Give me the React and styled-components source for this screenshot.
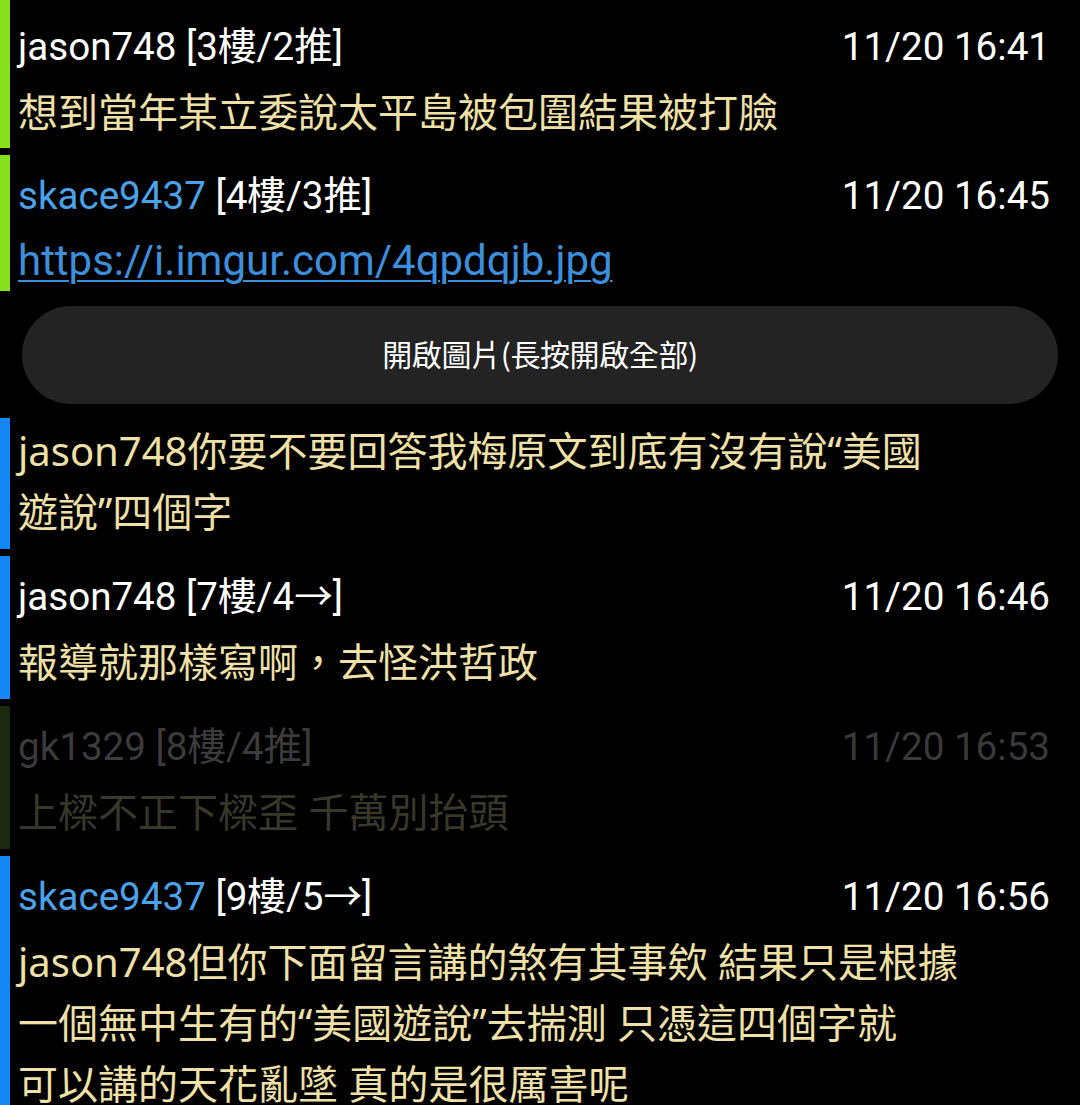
import React from "react";
import styled, { createGlobalStyle } from "styled-components";

const Global = createGlobalStyle`
  html, body { margin: 0; padding: 0; background: #000; }
  body { width: 1080px; overflow: hidden; }
  #root { width: 1080px; }
`;

const Page = styled.div`
  display: flex;
  flex-direction: column;
  gap: 7px;
  background: #000;
  width: 1080px;
`;

const Comment = styled.article`
  border-left: 10px solid ${(p) => p.$bar};
  padding: ${(p) => p.$pt ?? 7}px 30px ${(p) => p.$pb ?? 7}px 8px;
  display: flex;
  flex-direction: column;
`;

const Header = styled.div`
  display: flex;
  justify-content: space-between;
  align-items: center;
  height: 68px;
  font-family: Roboto, "Noto Sans CJK TC", sans-serif;
  font-size: 38.6px;
  line-height: 68px;
  white-space: nowrap;
`;

const Author = styled.span`
  color: ${(p) => (p.$dim ? "#3b3b3b" : p.$blue ? "#4aa2ea" : "#ffffff")};
`;

const Floor = styled.span`
  color: ${(p) => (p.$dim ? "#3b3b3b" : "#ffffff")};
`;

const Time = styled.span`
  color: ${(p) => (p.$dim ? "#393939" : "#ffffff")};
`;

const Body = styled.div`
  font-family: "Noto Sans", "Noto Sans CJK TC", sans-serif;
  font-size: 40px;
  line-height: ${(p) => p.$lh ?? 61}px;
  color: ${(p) => (p.$dim ? "#38382a" : "#eee0a6")};
  white-space: pre;
`;

const Link = styled.a`
  font-family: Roboto, sans-serif;
  font-size: 42px;
  color: #3c8fdc;
  text-decoration: underline;
  text-decoration-thickness: 2px;
  text-underline-offset: 5px;
`;

const ButtonRow = styled.div`
  padding: 8px 22px 7px 22px;
`;

const ImageButton = styled.button`
  width: 100%;
  height: 98px;
  border: none;
  border-radius: 49px;
  background: #232323;
  color: #ffffff;
  font-family: "Noto Sans CJK TC", sans-serif;
  font-size: 30px;
  letter-spacing: -0.4px;
  display: flex;
  align-items: center;
  justify-content: center;
  padding: 0 0 4px 0;
`;

const GREEN = "#86e01a";
const BLUE = "#1487f6";
const DARK = "#1b2a0c";

function Head({ author, blue, floor, time, dim }) {
  return (
    <Header>
      <span>
        <Author $blue={blue} $dim={dim}>{author}</Author>
        <Floor $dim={dim}> [{floor}]</Floor>
      </span>
      <Time $dim={dim}>{time}</Time>
    </Header>
  );
}

export default function App() {
  return (
    <>
      <Global />
      <Page>
        <Comment $bar={GREEN} $pt={13} $pb={6}>
          <Head author="jason748" floor="3樓/2推" time="11/20 16:41" />
          <Body>想到當年某立委說太平島被包圍結果被打臉</Body>
        </Comment>

        <Comment $bar={GREEN} $pb={0}>
          <Head author="skace9437" blue floor="4樓/3推" time="11/20 16:45" />
          <Body $lh={60}>
            <Link href="#">https://i.imgur.com/4qpdqjb.jpg</Link>
          </Body>
        </Comment>

        <ButtonRow>
          <ImageButton>開啟圖片(長按開啟全部)</ImageButton>
        </ButtonRow>

        <Comment $bar={BLUE} $pt={2}>
          <Body>{"jason748你要不要回答我梅原文到底有沒有說“美國\n遊說”四個字"}</Body>
        </Comment>

        <Comment $bar={BLUE}>
          <Head author="jason748" floor="7樓/4→" time="11/20 16:46" />
          <Body>報導就那樣寫啊，去怪洪哲政</Body>
        </Comment>

        <Comment $bar={DARK}>
          <Head author="gk1329" dim floor="8樓/4推" time="11/20 16:53" />
          <Body $dim>上樑不正下樑歪 千萬別抬頭</Body>
        </Comment>

        <Comment $bar={BLUE}>
          <Head author="skace9437" blue floor="9樓/5→" time="11/20 16:56" />
          <Body>
            {"jason748但你下面留言講的煞有其事欸 結果只是根據\n一個無中生有的“美國遊說”去揣測 只憑這四個字就\n可以講的天花亂墜 真的是很厲害呢"}
          </Body>
        </Comment>
      </Page>
    </>
  );
}
